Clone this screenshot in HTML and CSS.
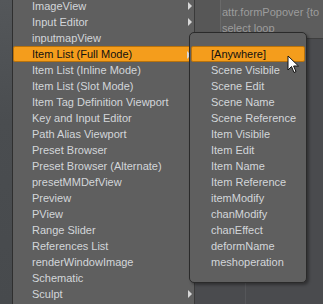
FILE: index.html
```html
<!DOCTYPE html>
<html lang="en">
<head>
  <meta charset="UTF-8" />
  <title>Viewport Menu</title>
  <link rel="stylesheet" href="styles.css">
</head>
<body>
  <div class="screen">
    <div class="viewport-left"></div>

    <!-- main popup menu -->
    <ul class="menu">
      <li class="sub">ImageView</li>
      <li class="sub">Input Editor</li>
      <li>inputmapView</li>
      <li class="hot sub">Item List (Full Mode)</li>
      <li>Item List (Inline Mode)</li>
      <li>Item List (Slot Mode)</li>
      <li>Item Tag Definition Viewport</li>
      <li>Key and Input Editor</li>
      <li>Path Alias Viewport</li>
      <li>Preset Browser</li>
      <li>Preset Browser (Alternate)</li>
      <li>presetMMDefView</li>
      <li>Preview</li>
      <li>PView</li>
      <li>Range Slider</li>
      <li>References List</li>
      <li>renderWindowImage</li>
      <li>Schematic</li>
      <li class="sub">Sculpt</li>
    </ul>

    <div class="right">
      <div class="panel">
        <div class="gutter"></div>
        <div class="rows">
          <div class="row">attr.formPopover {to</div>
          <div class="row">select loop</div>
        </div>
      </div>
      <div class="viewport-right">
        <div class="grid-line"></div>
      </div>
    </div>

    <!-- submenu of Item List (Full Mode) -->
    <ul class="submenu">
      <li class="hot">[Anywhere]</li>
      <li>Scene Visibile</li>
      <li>Scene Edit</li>
      <li>Scene Name</li>
      <li>Scene Reference</li>
      <li>Item Visibile</li>
      <li>Item Edit</li>
      <li>Item Name</li>
      <li>Item Reference</li>
      <li>itemModify</li>
      <li>chanModify</li>
      <li>chanEffect</li>
      <li>deformName</li>
      <li>meshoperation</li>
    </ul>

    <svg class="cursor" width="13" height="20" viewBox="0 0 13 20">
      <path d="M1 1 L1 15 L4.5 11.5 L7 17.5 L9 16.6 L6.6 11 L11.5 11 Z" fill="#fff" stroke="#111" stroke-width="1" stroke-linejoin="round"/>
    </svg>
  </div>
</body>
</html>
```

FILE: styles.css
```css
body {
  margin: 0;
  background-color: #4b4d50;
  font-family: "Liberation Sans", Arial, sans-serif;
  font-size: 11px;
}
.screen {
  position: relative;
  width: 323px;
  height: 304px;
  overflow: hidden;
  display: flex;
}
.viewport-left {
  width: 12px;
  background: linear-gradient(180deg, #54575a 0%, #4a4d50 40%, #474a4d 100%);
  border-right: 1px solid #2f2f2f;
}
ul {
  list-style: none;
  margin: 0;
  padding: 0;
}
.menu {
  width: 181px;
  margin-top: -2px;
  background-color: #5f5f5f;
  border-right: 1px solid #3a3a3a;
}
.menu li {
  position: relative;
  height: 16px;
  line-height: 16px;
  padding-left: 19px;
  color: #d3d6da;
  white-space: nowrap;
  box-sizing: border-box;
}
.menu li.sub::after {
  content: "";
  position: absolute;
  right: 2px;
  top: 4px;
  border-left: 4px solid #d8d8d8;
  border-top: 4px solid transparent;
  border-bottom: 4px solid transparent;
}
.hot {
  background-color: #f49d1c;
  border: 1px solid #b8720c;
  border-radius: 2px;
  color: #111 !important;
}
.menu li.hot {
  padding-left: 18px;
  line-height: 14px;
}
.right {
  flex: 1;
  display: flex;
  flex-direction: column;
}
.panel {
  height: 38px;
  display: flex;
  background-color: #5d5d5d;
}
.gutter {
  width: 25px;
  background-color: #575757;
  border-right: 1px solid #6a6a6a;
}
.rows {
  flex: 1;
  padding-top: 4px;
}
.row {
  height: 16px;
  line-height: 16px;
  padding-left: 1px;
  color: #9c9c9c;
  white-space: nowrap;
  overflow: hidden;
}
.viewport-right {
  flex: 1;
  position: relative;
  background-color: #4a4b4e;
  border-top: 1px solid #3e3e3e;
}
.grid-line {
  position: absolute;
  left: 50px;
  top: 0;
  bottom: 0;
  width: 1px;
  background-color: #555659;
}
.submenu {
  position: absolute;
  left: 189px;
  top: 32px;
  width: 118px;
  height: 251px;
  box-sizing: border-box;
  padding: 13px 1px 0 1px;
  background-color: #5f5f5f;
  border: 1px solid #2a2a2a;
  border-radius: 5px;
  box-shadow: 2px 2px 3px rgba(0, 0, 0, 0.35);
}
.submenu li {
  height: 16px;
  line-height: 16px;
  padding-left: 20px;
  color: #d3d6da;
  white-space: nowrap;
  box-sizing: border-box;
}
.submenu li.hot {
  padding-left: 19px;
  line-height: 14px;
}
.cursor {
  position: absolute;
  left: 287px;
  top: 55px;
}
```
